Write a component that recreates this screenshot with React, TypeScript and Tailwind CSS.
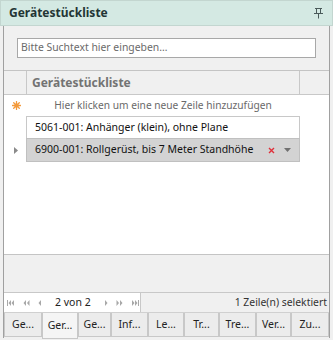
import React from 'react';

const font = { fontFamily: '"Noto Sans", "Liberation Sans", sans-serif' };

function PinIcon() {
  return (
    <svg width="9" height="11" viewBox="0 0 9 11" className="text-[#4a5a5a]">
      <path d="M1 0.5H8M2.5 0.5V5M6.5 0.5V5M0 5.5H9M4.5 5.5V10.5" stroke="currentColor" strokeWidth="1" fill="none" />
    </svg>
  );
}

function StarIcon() {
  return (
    <svg width="9" height="9" viewBox="0 0 9 9">
      <g stroke="#f39a3c" strokeWidth="1.3" strokeLinecap="round">
        <path d="M4.5 0.5V8.5M0.5 4.5H8.5M1.7 1.7L7.3 7.3M7.3 1.7L1.7 7.3" />
      </g>
      <circle cx="4.5" cy="4.5" r="2" fill="#f39a3c" />
    </svg>
  );
}

function NavIcon({ kind }: { kind: 'first' | 'prevPage' | 'prev' | 'next' | 'nextPage' | 'last' }) {
  const c = '#a8a8a8';
  if (kind === 'first')
    return (
      <svg width="8" height="6" viewBox="0 0 8 6">
        <rect x="0" y="0" width="1" height="6" fill={c} />
        <path d="M4 0L1.5 3L4 6Z M7 0L4.5 3L7 6Z" fill={c} />
      </svg>
    );
  if (kind === 'prevPage')
    return (
      <svg width="7" height="6" viewBox="0 0 7 6">
        <path d="M3 0L0.5 3L3 6Z M6.5 0L4 3L6.5 6Z" fill={c} />
      </svg>
    );
  if (kind === 'prev')
    return (
      <svg width="4" height="6" viewBox="0 0 4 6">
        <path d="M3 0L0.5 3L3 6Z" fill={c} />
      </svg>
    );
  if (kind === 'next')
    return (
      <svg width="4" height="6" viewBox="0 0 4 6">
        <path d="M1 0L3.5 3L1 6Z" fill={c} />
      </svg>
    );
  if (kind === 'nextPage')
    return (
      <svg width="7" height="6" viewBox="0 0 7 6">
        <path d="M0.5 0L3 3L0.5 6Z M4 0L6.5 3L4 6Z" fill={c} />
      </svg>
    );
  return (
    <svg width="8" height="6" viewBox="0 0 8 6">
      <path d="M1 0L3.5 3L1 6Z M4 0L6.5 3L4 6Z" fill={c} />
      <rect x="7" y="0" width="1" height="6" fill={c} />
    </svg>
  );
}

const tabs = [
  { label: 'Ge...', w: 38 },
  { label: 'Ger...', w: 36, active: true },
  { label: 'Ge...', w: 33 },
  { label: 'Inf...', w: 37 },
  { label: 'Le...', w: 36 },
  { label: 'Tr...', w: 35 },
  { label: 'Tre...', w: 37 },
  { label: 'Ver...', w: 35 },
  { label: 'Zu...', w: 38 },
];

export default function App() {
  return (
    <div className="w-[333px] h-[340px] bg-[#f0f0f0] flex flex-col overflow-hidden text-[10.5px] text-[#111] whitespace-nowrap" style={font}>
      <div className="h-[26px] shrink-0 bg-[#d4e9e3] border border-[#c3d6d0] flex items-center justify-between pl-[8px] pr-[9px]">
        <span className="font-bold text-[12px] text-[#233535]">Gerätestückliste</span>
        <PinIcon />
      </div>

      <div className="ml-[3px] w-[327px] flex-1 flex flex-col border-x border-[#a0a0a0]">
        <div className="pt-[12px] pl-[13px] pr-[13px]">
          <div className="h-[20px] bg-white border border-[#a8a8a8] flex items-center pl-[3px] text-[#6a6a6a] text-[10.4px]">
            Bitte Suchtext hier eingeben…
          </div>
        </div>

        <div className="mt-[12px] h-[185px] bg-white border-t border-b border-[#c4c4c4] flex flex-col">
          <div className="h-[24px] bg-[#f0f0f0] border-b border-[#c8c8c8] flex">
            <div className="w-[23px] border-r border-[#c8c8c8]" />
            <div className="w-[273px] border-r border-[#c8c8c8] flex items-center pl-[5px] font-bold text-[12px] text-[#737373]">
              Gerätestückliste
            </div>
            <div className="flex-1" />
          </div>
          <div className="h-[21px] flex items-center">
            <div className="w-[22px] flex justify-center pl-[2px]">
              <StarIcon />
            </div>
            <div className="w-[274px] text-center text-[#6a6a6a] text-[10.2px]">Hier klicken um eine neue Zeile hinzuzufügen</div>
          </div>
          <div className="h-[22px] flex">
            <div className="w-[22px]" />
            <div className="w-[274px] border border-[#c8c8c8] border-b-0 flex items-center pl-[8px]">
              5061-001: Anhänger (klein), ohne Plane
            </div>
          </div>
          <div className="h-[24px] flex">
            <div className="w-[22px] flex items-center justify-center pl-[2px]">
              <svg width="4" height="7" viewBox="0 0 4 7">
                <path d="M0 0L4 3.5L0 7Z" fill="#8a8a8a" />
              </svg>
            </div>
            <div className="w-[274px] bg-[#d3d3d3] border border-[#c0c0c0] flex items-center pl-[8px] pr-[8px]">
              <span className="flex-1">6900-001: Rollgerüst, bis 7 Meter Standhöhe</span>
              <svg width="7" height="7" viewBox="0 0 7 7" className="mr-[9px]">
                <path d="M1 1L6 6M6 1L1 6" stroke="#e0303a" strokeWidth="1.4" />
              </svg>
              <svg width="7" height="4" viewBox="0 0 7 4">
                <path d="M0 0H7L3.5 4Z" fill="#707070" />
              </svg>
            </div>
          </div>
        </div>

        <div className="flex-1" />

        <div className="h-[20px] flex items-center border-t border-[#c8c8c8]">
          <div className="w-[137px] h-full bg-white border-r border-[#c8c8c8] flex items-center pl-[3px] gap-[8px]">
            <NavIcon kind="first" />
            <NavIcon kind="prevPage" />
            <NavIcon kind="prev" />
            <span className="text-[#222] mx-[5px] text-[10.5px]">2 von 2</span>
            <NavIcon kind="next" />
            <NavIcon kind="nextPage" />
            <NavIcon kind="last" />
          </div>
          <div className="flex-1 text-right pr-[2px] text-[#333] text-[10.4px]">1 Zeile(n) selektiert</div>
        </div>

        <div className="h-[26px] flex items-start border-t border-[#d0d0d0]">
          {tabs.map((t, i) => (
            <div
              key={i}
              style={{ width: t.w }}
              className={
                t.active
                  ? 'h-[26px] bg-[#f5f5f5] border-x border-b border-[#c8c8c8] flex items-center justify-center text-[#222] text-[10.5px]'
                  : 'h-[24px] bg-[#ececec] border border-t-0 border-[#c8c8c8] flex items-center justify-center text-[#222] text-[10.5px]'
              }
            >
              {t.label}
            </div>
          ))}
        </div>
      </div>
      <div className="h-[2px] shrink-0" />
    </div>
  );
}
